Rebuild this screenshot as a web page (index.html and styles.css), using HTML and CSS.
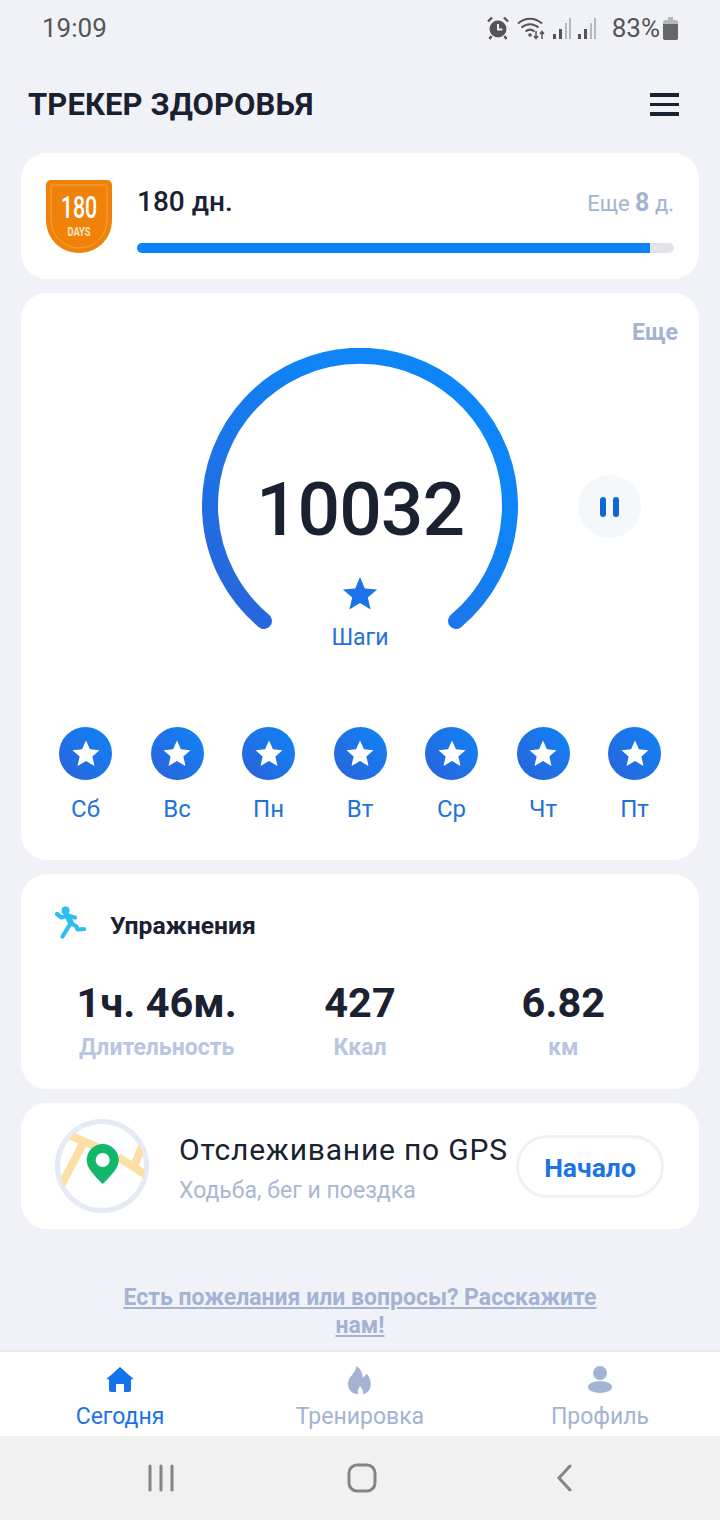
FILE: index.html
```html
<!DOCTYPE html>
<html lang="ru">
<head>
    <meta charset="UTF-8">
    <meta name="viewport" content="width=device-width, initial-scale=1.0">
    <title>Трекер здоровья</title>
    <link rel="stylesheet" href="styles.css">
</head>
<body>
    <div class="status-bar">
        <span class="status-time">19:09</span>
        <div class="status-icons">
            <svg width="26" height="24" viewBox="0 0 26 24">
                <circle cx="13" cy="13" r="8.5" fill="#555"/>
                <path d="M3 5.500 7 1.500M23 5.500 19 1.500M6.500 20 4.500 23M19.500 20l2 3" stroke="#555" stroke-width="2.400" fill="none"/>
                <path d="M13 8v5.500h4.500" stroke="#f0f2f7" stroke-width="2" fill="none"/>
            </svg>
            <svg width="30" height="24" viewBox="0 0 28 24">
                <path d="M1 7.500C8 1 18 1 25 7.500M4.500 11.500C9.500 7 16.500 7 21.500 11.500M8.500 15.500C11.500 13 14.500 13 17.500 15.500" stroke="#555" stroke-width="2" fill="none"/>
                <circle cx="13" cy="19" r="1.800" fill="#555"/>
                <path d="M19 15v7M17 20l2 2.500 2-2.500M25 23v-7M23 18l2-2.500 2 2.500" stroke="#555" stroke-width="1.500" fill="none"/>
            </svg>
            <svg width="20" height="24" viewBox="0 0 20 24">
                <path d="M2 18h3v5H2zM8 13h3v10H8z" fill="#555"/>
                <path d="M14 7h2v16h-2zM18 2h2v21h-2z" fill="#b5b8be"/>
            </svg>
            <svg width="20" height="24" viewBox="0 0 20 24">
                <path d="M2 18h3v5H2zM8 13h3v10H8z" fill="#555"/>
                <path d="M14 7h2v16h-2zM18 2h2v21h-2z" fill="#b5b8be"/>
            </svg>
            <span class="status-pct">83%</span>
            <svg width="15" height="23" viewBox="0 0 15 23">
                <path d="M5 0h5v3h3a2 2 0 0 1 2 2v16a2 2 0 0 1-2 2H2a2 2 0 0 1-2-2V5a2 2 0 0 1 2-2h3z" fill="#b5b8be"/>
                <path d="M0 7h15v14a2 2 0 0 1-2 2H2a2 2 0 0 1-2-2z" fill="#666"/>
            </svg>
        </div>
    </div>

    <header class="app-header">
        <h1>ТРЕКЕР ЗДОРОВЬЯ</h1>
        <div class="menu-icon"><span></span><span></span><span></span></div>
    </header>

    <main class="cards">
        <section class="card streak">
            <svg class="badge" width="66" height="73" viewBox="0 0 66 73">
                <path d="M5 0h56a5 5 0 0 1 5 5v35c0 19-15 33-33 33S0 59 0 40V5a5 5 0 0 1 5-5z" fill="#f0820a"/>
                <path d="M7 5h52a2 2 0 0 1 2 2v33c0 16-13 28-28 28S5 56 5 40V7a2 2 0 0 1 2-2z" fill="none" stroke="#f6a64a" stroke-width="1"/>
                <text transform="translate(33 38) scale(0.69 1)" text-anchor="middle" class="badge-num">180</text>
                <text transform="translate(33 56) scale(0.78 1)" text-anchor="middle" class="badge-days">DAYS</text>
            </svg>
            <div class="streak-body">
                <div class="streak-top">
                    <span class="streak-days">180 дн.</span>
                    <span class="streak-left">Еще <b>8</b> д.</span>
                </div>
                <div class="progress"><div class="progress-fill" style="width: 95.5%"></div></div>
            </div>
        </section>

        <section class="card steps">
            <div class="more">Еще</div>
            <div class="gauge-row">
                <div class="gauge">
                    <svg class="gauge-arc" width="316" height="304" viewBox="0 0 316 304">
                        <defs>
                            <linearGradient id="arcGrad" x1="0" y1="1" x2="1" y2="0">
                                <stop offset="0" stop-color="#2b62d9"/>
                                <stop offset="0.65" stop-color="#0f84f6"/>
                                <stop offset="1" stop-color="#0b87fa"/>
                            </linearGradient>
                        </defs>
                        <path d="M62 273 A150 150 0 1 1 254 273" fill="none" stroke="url(#arcGrad)" stroke-width="16" stroke-linecap="round"/>
                    </svg>
                    <div class="gauge-text">
                        <div class="step-count">10032</div>
                        <svg class="gauge-star" width="36" height="33" viewBox="0 0 24 22">
                            <path d="M12 0l3.200 7.600 8.200.7-6.200 5.400 1.900 8L12 17.400 4.900 21.700l1.900-8L.6 8.300l8.200-.7z" fill="#1c72e8"/>
                        </svg>
                        <div class="gauge-label">Шаги</div>
                    </div>
                </div>
                <div class="pause-btn"><span></span><span></span></div>
            </div>
            <div class="week">
                <div class="day"><div class="day-dot"><svg width="30" height="27" viewBox="0 0 24 22"><path d="M12 .5l3.200 7 7.800.8-5.800 5.200 1.700 7.600L12 17.200 5.100 21.100l1.700-7.600L1 8.300l7.800-.8z" fill="#fff"/></svg></div><span>Сб</span></div>
                <div class="day"><div class="day-dot"><svg width="30" height="27" viewBox="0 0 24 22"><path d="M12 .5l3.200 7 7.800.8-5.800 5.200 1.700 7.600L12 17.200 5.100 21.100l1.700-7.600L1 8.300l7.800-.8z" fill="#fff"/></svg></div><span>Вс</span></div>
                <div class="day"><div class="day-dot"><svg width="30" height="27" viewBox="0 0 24 22"><path d="M12 .5l3.200 7 7.800.8-5.800 5.200 1.700 7.600L12 17.200 5.100 21.100l1.700-7.600L1 8.300l7.800-.8z" fill="#fff"/></svg></div><span>Пн</span></div>
                <div class="day"><div class="day-dot"><svg width="30" height="27" viewBox="0 0 24 22"><path d="M12 .5l3.200 7 7.800.8-5.800 5.200 1.700 7.600L12 17.200 5.100 21.100l1.700-7.600L1 8.300l7.800-.8z" fill="#fff"/></svg></div><span>Вт</span></div>
                <div class="day"><div class="day-dot"><svg width="30" height="27" viewBox="0 0 24 22"><path d="M12 .5l3.200 7 7.800.8-5.800 5.200 1.700 7.600L12 17.200 5.100 21.100l1.700-7.600L1 8.300l7.800-.8z" fill="#fff"/></svg></div><span>Ср</span></div>
                <div class="day"><div class="day-dot"><svg width="30" height="27" viewBox="0 0 24 22"><path d="M12 .5l3.200 7 7.800.8-5.800 5.200 1.700 7.600L12 17.200 5.100 21.100l1.700-7.600L1 8.300l7.800-.8z" fill="#fff"/></svg></div><span>Чт</span></div>
                <div class="day"><div class="day-dot"><svg width="30" height="27" viewBox="0 0 24 22"><path d="M12 .5l3.200 7 7.800.8-5.800 5.200 1.700 7.600L12 17.200 5.100 21.100l1.700-7.600L1 8.300l7.800-.8z" fill="#fff"/></svg></div><span>Пт</span></div>
            </div>
        </section>

        <section class="card exercise">
            <div class="exercise-head">
                <svg width="32" height="38" viewBox="1 0 32 38">
                    <circle cx="11.500" cy="4.500" r="4" fill="#2dbff3"/>
                    <path d="M3 8 7.500 11.500 13.500 9.500 21 11.500M17 17 22.500 20.500 23.500 23.500 30 23M16.500 17.500 12.500 24 8.500 30.500" fill="none" stroke="#2dbff3" stroke-width="4.200" stroke-linecap="round" stroke-linejoin="round"/>
                    <path d="M13.500 10 17 17" fill="none" stroke="#2dbff3" stroke-width="6" stroke-linecap="round"/>
                </svg>
                <h2>Упражнения</h2>
            </div>
            <div class="stats">
                <div class="stat"><div class="stat-value">1ч. 46м.</div><div class="stat-label">Длительность</div></div>
                <div class="stat"><div class="stat-value">427</div><div class="stat-label">Ккал</div></div>
                <div class="stat"><div class="stat-value">6.82</div><div class="stat-label">км</div></div>
            </div>
        </section>

        <section class="card gps">
            <svg class="gps-map" width="96" height="96" viewBox="0 0 96 96">
                <defs>
                    <clipPath id="mapClip"><circle cx="48" cy="48" r="43"/></clipPath>
                </defs>
                <circle cx="48" cy="48" r="44.500" fill="#fff" stroke="#e5eaf4" stroke-width="5"/>
                <g clip-path="url(#mapClip)">
                    <path d="M15 17 43 29M29.300 25 8 66M64 39 92 57M81 46 88 28" fill="none" stroke="#fddfa6" stroke-width="8"/>
                </g>
                <path d="M48.700 66C39 56 32.700 50 32.700 42a16 16 0 0 1 32 0C64.700 50 58.500 56 48.700 66z" fill="#12b76a"/>
                <circle cx="48.700" cy="42" r="7" fill="#fff"/>
            </svg>
            <div class="gps-text">
                <div class="gps-title">Отслеживание по GPS</div>
                <div class="gps-sub">Ходьба, бег и поездка</div>
            </div>
            <button class="start-btn">Начало</button>
        </section>
    </main>

    <a class="feedback" href="#">Есть пожелания или вопросы? Расскажите нам!</a>

    <nav class="tabbar">
        <div class="tab active">
            <svg width="30" height="28" viewBox="0 0 30 28">
                <path d="M15 1 28.500 13 26 13.500V24a2 2 0 0 1-2 2H19V18h-8v8H6a2 2 0 0 1-2-2V13.500L1.500 13z" fill="#1273eb"/>
            </svg>
            <span>Сегодня</span>
        </div>
        <div class="tab">
            <svg width="30" height="28" viewBox="-2 0 30 28">
                <path d="M9 28C4 27 1 23 1 18 1 11 8 8 9.700 0c4 3 6 7 6 11.700 1.300-1 3-2.500 4-4 3 3 4 7 4 11 0 5-3.500 9-8 9.300 1-3-.7-6-2.700-8-1.500 2.500-3 5-1.500 8z" fill="#a3b3d3"/>
            </svg>
            <span>Тренировка</span>
        </div>
        <div class="tab">
            <svg width="30" height="28" viewBox="0 0 30 28">
                <ellipse cx="15" cy="7" rx="7" ry="7" fill="#a3b3d3"/>
                <ellipse cx="15" cy="21" rx="12" ry="6" fill="#a3b3d3"/>
            </svg>
            <span>Профиль</span>
        </div>
    </nav>

    <div class="system-nav">
        <svg width="26" height="28" viewBox="0 0 26 28">
            <path d="M2 2v24M13 2v24M24 2v24" stroke="#858585" stroke-width="3" stroke-linecap="round"/>
        </svg>
        <svg class="nav-home" width="30" height="30" viewBox="0 0 30 30">
            <rect x="2" y="2" width="26" height="26" rx="8" fill="none" stroke="#858585" stroke-width="3"/>
        </svg>
        <svg class="nav-back" width="16" height="28" viewBox="0 0 16 28">
            <path d="M14 2 3 14l11 12" fill="none" stroke="#858585" stroke-width="3" stroke-linecap="round"/>
        </svg>
    </div>
</body>
</html>
```
FILE: styles.css
```css
* {
    box-sizing: border-box;
}
body {
    margin: 0;
    width: 720px;
    height: 1520px;
    overflow: hidden;
    display: flex;
    flex-direction: column;
    font-family: Roboto, "Noto Sans", sans-serif;
    background-color: #f0f2f7;
    color: #1a2130;
}
.status-bar {
    height: 56px;
    padding: 0 42px;
    display: flex;
    align-items: center;
    justify-content: space-between;
    color: #555;
}
.status-time {
    font-size: 26px;
}
.status-icons {
    display: flex;
    align-items: center;
    gap: 5px;
}
.status-pct {
    font-size: 26px;
    margin: 0 -2px 0 11px;
}
.app-header {
    height: 97px;
    padding: 0 28px;
    display: flex;
    align-items: center;
    justify-content: space-between;
}
.app-header h1 {
    margin: 0;
    font-size: 31px;
    font-weight: 700;
    letter-spacing: 0.1px;
}
.menu-icon {
    width: 29px;
    display: flex;
    flex-direction: column;
    gap: 6px;
    margin-right: 13px;
}
.menu-icon span {
    height: 3.5px;
    background-color: #1a2130;
}
.cards {
    padding: 0 21px;
    display: flex;
    flex-direction: column;
    gap: 14px;
}
.card {
    background-color: white;
    border-radius: 26px;
}
.streak {
    height: 126px;
    padding: 27px 25px 0;
    display: flex;
    gap: 25px;
}
.streak-body {
    flex: 1;
}
.streak-top {
    height: 63px;
    padding-top: 5px;
    display: flex;
    justify-content: space-between;
}
.streak-days {
    font-size: 28px;
    font-weight: 500;
}
.streak-left {
    font-size: 22px;
    color: #a3b3d3;
    padding-top: 3px;
}
.streak-left b {
    font-size: 25px;
    font-weight: 700;
}
.progress {
    height: 10px;
    border-radius: 5px;
    background-color: #e2e4e8;
    overflow: hidden;
}
.progress-fill {
    height: 100%;
    background-color: #0b84f7;
}
.badge-num {
    font: 500 31px Roboto, sans-serif;
    fill: #fff;
}
.badge-days {
    font: 700 12px Roboto, sans-serif;
    fill: #fde4c4;
}
.steps {
    height: 567px;
    padding: 26px 21px 0 0;
}
.more {
    height: 29px;
    text-align: right;
    font-size: 23px;
    font-weight: 700;
    color: #a3b3d3;
}
.gauge-row {
    display: grid;
    grid-template-columns: 181px 316px 1fr;
    align-items: center;
}
.gauge {
    grid-column: 2;
    display: grid;
    height: 304px;
}
.gauge-arc {
    grid-area: 1 / 1;
}
.gauge-text {
    grid-area: 1 / 1;
    display: flex;
    flex-direction: column;
    align-items: center;
}
.step-count {
    margin-top: 114px;
    font-size: 75px;
    font-weight: 500;
    letter-spacing: -1px;
    line-height: 94px;
}
.gauge-star {
    margin-top: 21px;
}
.gauge-label {
    margin-top: 14px;
    font-size: 23px;
    color: #2272d8;
}
.pause-btn {
    grid-column: 3;
    margin: 13px 0 0 60px;
    width: 63px;
    height: 63px;
    border-radius: 50%;
    background-color: #f4f8fb;
    display: flex;
    align-items: center;
    justify-content: center;
    gap: 7px;
}
.pause-btn span {
    width: 6px;
    height: 20px;
    border-radius: 3px;
    background-color: #0d68d3;
}
.week {
    margin-top: 75px;
    padding: 0 17px 0 38px;
    display: flex;
    justify-content: space-between;
}
.day {
    width: 53px;
    display: flex;
    flex-direction: column;
    align-items: center;
    gap: 15px;
    font-size: 24px;
    color: #2272d8;
}
.day-dot {
    width: 53px;
    height: 53px;
    border-radius: 50%;
    background: linear-gradient(45deg, #2b62d9, #0f84f6);
    display: flex;
    align-items: center;
    justify-content: center;
}
.exercise {
    height: 215px;
    padding: 32px 34px 0;
}
.exercise-head {
    display: flex;
    align-items: center;
    gap: 23px;
}
.exercise-head h2 {
    margin: 0;
    font-size: 24.7px;
    font-weight: 700;
}
.stats {
    margin-top: 35px;
    display: grid;
    grid-template-columns: repeat(3, 1fr);
    text-align: center;
}
.stat-value {
    font-size: 41.5px;
    font-weight: 700;
    line-height: 48px;
}
.stat-label {
    margin-top: 6px;
    font-size: 23px;
    font-weight: 700;
    color: #b9c6df;
    line-height: 30px;
}
.gps {
    height: 126px;
    padding: 0 35px 0 33px;
    display: flex;
    align-items: center;
}
.gps-text {
    margin-left: 29px;
    padding-top: 3px;
    flex: 1;
}
.gps-title {
    font-size: 30px;
    font-weight: 400;
    letter-spacing: 0.8px;
    white-space: nowrap;
}
.gps-sub {
    margin-top: 10px;
    font-size: 23px;
    color: #a9b7d3;
}
.start-btn {
    width: 148px;
    height: 63px;
    padding-top: 4px;
    flex-shrink: 0;
    border: 3px solid #eef1f6;
    border-radius: 32px;
    background-color: white;
    color: #1a73e8;
    font: 700 26.5px Roboto, sans-serif;
}
.feedback {
    margin: 55px auto 0;
    width: 500px;
    text-align: center;
    font-size: 23px;
    font-weight: 700;
    line-height: 28px;
    color: #a3b3d3;
}
.tabbar {
    margin-top: 10px;
    height: 86px;
    border-top: 2px solid #e4e8f0;
    background-color: white;
    display: flex;
}
.tab {
    flex: 1;
    padding-top: 14px;
    display: flex;
    flex-direction: column;
    align-items: center;
    gap: 9px;
    font-size: 23px;
    color: #a3b3d3;
}
.tab.active {
    color: #1c72e8;
}
.system-nav {
    flex: 1;
    padding-left: 148px;
    background-color: #f1f1f1;
    display: flex;
    align-items: center;
}
.nav-home {
    margin-left: 173px;
}
.nav-back {
    margin-left: 179px;
}
```
